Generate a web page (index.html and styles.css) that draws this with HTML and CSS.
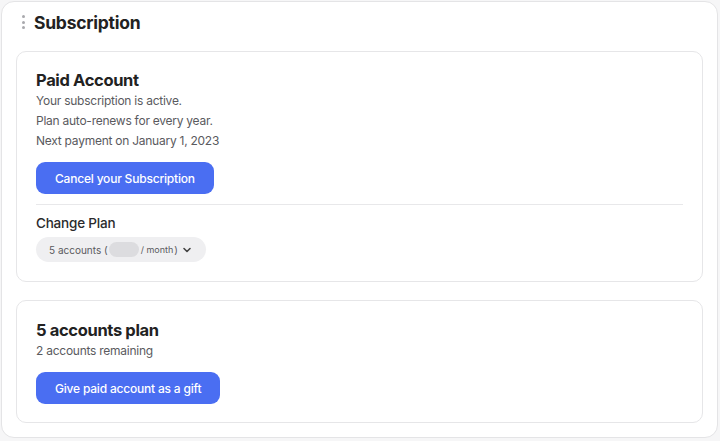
FILE: index.html
```html
<!DOCTYPE html>
<html lang="en">

<head>
    <meta charset="UTF-8">
    <meta name="viewport" content="width=device-width, initial-scale=1.0">
    <title>Subscription</title>
    <link rel="stylesheet" href="styles.css">
</head>

<body>
    <div class="panel">
        <div class="panel-head">
            <span class="handle">
                <i></i><i></i><i></i>
            </span>
            <h1 class="panel-title">Subscription</h1>
        </div>

        <div class="card">
            <h2 class="card-title">Paid Account</h2>
            <p class="line">Your subscription is active.</p>
            <p class="line">Plan auto-renews for every year.</p>
            <p class="line">Next payment on January 1, 2023</p>
            <button class="btn">Cancel your Subscription</button>
            <div class="divider"></div>
            <div class="sub-title">Change Plan</div>
            <button class="plan-select">
                5 accounts (<span class="price"></span><span class="per">/ month</span>)
                <svg class="chev" width="10" height="10" viewBox="0 0 10 10">
                    <path d="M2 3.5 L5 6.5 L8 3.5" fill="none" stroke="#444" stroke-width="1.6" stroke-linecap="round" stroke-linejoin="round"/>
                </svg>
            </button>
        </div>

        <div class="card">
            <h2 class="card-title">5 accounts plan</h2>
            <p class="line">2 accounts remaining</p>
            <button class="btn">Give paid account as a gift</button>
        </div>
    </div>
</body>

</html>
```

FILE: styles.css
```css
* {
    box-sizing: border-box;
}
body {
    margin: 0;
    padding: 1px;
    background-color: #f6f6f7;
    font-family: Inter, "Liberation Sans", sans-serif;
}
.panel {
    width: 717px;
    height: 437px;
    background-color: #fff;
    border: 1px solid #e4e4e6;
    border-radius: 13px;
    padding: 0 14px 14px;
    display: flex;
    flex-direction: column;
    gap: 17px;
}
.panel-head {
    height: 32px;
    display: flex;
    align-items: flex-end;
    gap: 9px;
    padding-left: 6px;
}
.handle {
    display: flex;
    flex-direction: column;
    gap: 2.5px;
    padding-bottom: 5px;
}
.handle i {
    width: 3px;
    height: 3px;
    border-radius: 50%;
    background-color: #a9a9ad;
}
.panel-title {
    margin: 0;
    font-size: 17.5px;
    font-weight: 700;
    color: #222;
    line-height: 22px;
    letter-spacing: -0.25px;
}
.card {
    border: 1px solid #e6e6e8;
    border-radius: 10px;
    padding: 17px 19px 19px;
    display: flex;
    flex-direction: column;
    align-items: flex-start;
}
.card + .card {
    margin-top: 1px;
    padding-top: 18px;
    padding-bottom: 18px;
}
.card-title {
    margin: 0;
    font-size: 16.5px;
    font-weight: 700;
    line-height: 22px;
    color: #222;
    letter-spacing: -0.35px;
}
.line {
    margin: 0;
    font-size: 12px;
    line-height: 20px;
    color: #5a5a5e;
    letter-spacing: -0.25px;
}
.btn {
    margin-top: 11px;
    height: 32px;
    padding: 0 19px;
    border: none;
    border-radius: 9px;
    background-color: #4a6ef2;
    color: #fff;
    font-family: inherit;
    font-size: 12px;
    font-weight: 500;
    letter-spacing: -0.2px;
}
.divider {
    align-self: stretch;
    height: 1px;
    background-color: #e8e8ea;
    margin-top: 10px;
}
.sub-title {
    margin-top: 8px;
    font-size: 13.5px;
    font-weight: 500;
    line-height: 20px;
    color: #2a2a2c;
    letter-spacing: -0.2px;
}
.plan-select {
    margin-top: 4px;
    height: 25px;
    padding: 0 14px 0 13px;
    border: none;
    border-radius: 13px;
    background-color: #efeff1;
    color: #5a5a5e;
    font-family: inherit;
    font-size: 10px;
    display: flex;
    align-items: center;
}
.price {
    width: 30px;
    height: 15px;
    border-radius: 8px;
    background-color: #dcdcdf;
    margin: 0 2px 0 1px;
}
.per {
    font-size: 9px;
    margin-right: 1px;
}
.chev {
    margin-left: 4px;
}
```
